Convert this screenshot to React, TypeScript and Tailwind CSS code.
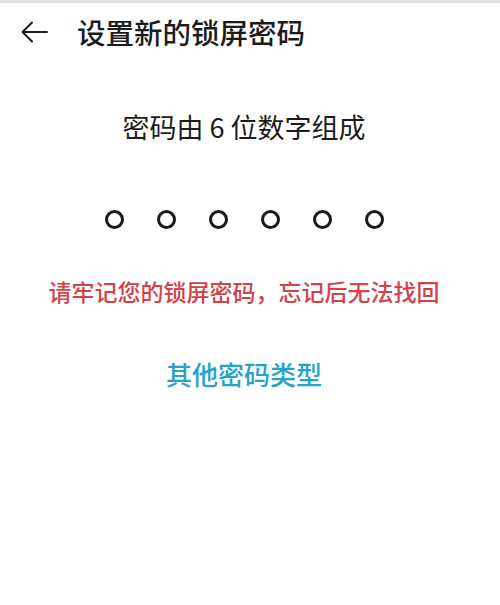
import React from 'react';

const font = { fontFamily: '"Noto Sans CJK SC", "Noto Sans", sans-serif' };

const BackArrow: React.FC = () => (
  <svg width="27" height="22" viewBox="0 0 27 22" fill="none" stroke="#1c1c1c" strokeWidth="2" strokeLinecap="round" strokeLinejoin="round">
    <path d="M26 11H2" />
    <path d="M11 1.5L1.5 11L11 20.5" />
  </svg>
);

const App: React.FC = () => {
  const dots = [0, 1, 2, 3, 4, 5];

  return (
    <div className="w-[500px] h-[605px] bg-white overflow-hidden" style={font}>
      <div className="h-[3px] bg-[#e4e4e4]" />

      {/* Header */}
      <div className="h-[58px] flex items-center pl-[21px]">
        <BackArrow />
        <h1 className="ml-[29px] text-[28.5px] leading-none text-[#1c1c1c] font-medium">设置新的锁屏密码</h1>
      </div>

      <div className="w-[488px] flex flex-col items-center">
        <div className="mt-[45px] h-[40px] flex items-center text-[27px] leading-none text-[#1c1c1c]">
          密码由 6 位数字组成
        </div>

        {/* PIN dots */}
        <div className="mt-[53px] h-[40px] w-full flex items-center pl-[105px] gap-[33px]">
          {dots.map(i => (
            <div key={i} className="w-[19px] h-[19px] rounded-full border-[3px] border-[#1a1a1a]" />
          ))}
        </div>

        <div className="mt-[32px] h-[40px] flex items-center text-[23px] leading-none text-[#d3424a] font-medium">
          请牢记您的锁屏密码，忘记后无法找回
        </div>

        <button className="mt-[43px] h-[40px] flex items-center text-[26px] leading-none text-[#26a3c6] font-medium">
          其他密码类型
        </button>
      </div>
    </div>
  );
};

export default App;
